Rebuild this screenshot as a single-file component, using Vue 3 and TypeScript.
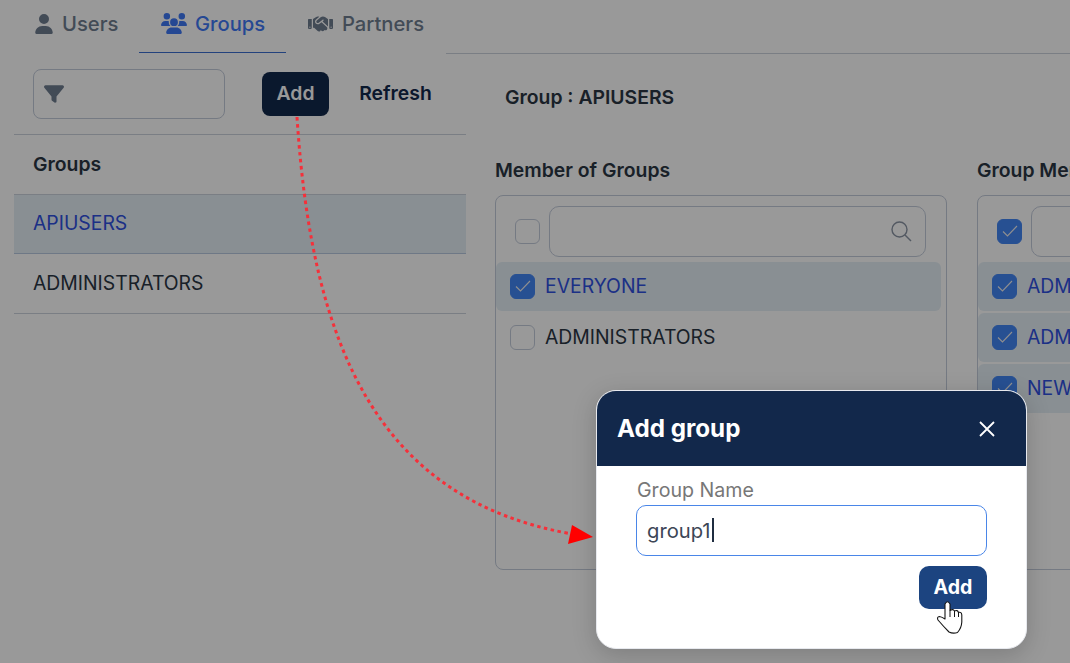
<script setup lang="ts">
interface Row { label: string; checked: boolean }
const memberOf: Row[] = [
  { label: 'EVERYONE', checked: true },
  { label: 'ADMINISTRATORS', checked: false },
]
const members: Row[] = [
  { label: 'ADMIN1', checked: true },
  { label: 'ADMIN2', checked: true },
  { label: 'NEWUSER', checked: true },
]
const panels = [
  { title: 'Member of Groups', all: false, rows: memberOf },
  { title: 'Group Members', all: true, rows: members },
]
</script>

<template>
  <div class="page">
    <nav class="tabs">
      <div class="tab users">
        <svg class="ico" width="18" height="20" viewBox="0 0 448 512"><path d="M224 256A128 128 0 1 0 224 0a128 128 0 1 0 0 256zm-45.700 48C79.800 304 0 383.800 0 482.300C0 498.700 13.300 512 29.700 512H418.300c16.400 0 29.700-13.300 29.700-29.700C448 383.800 368.200 304 269.700 304H178.300z"/></svg>
        <span>Users</span>
      </div>
      <div class="tab groups">
        <svg class="ico" width="26" height="21" viewBox="0 0 640 512"><path d="M144 0a80 80 0 1 1 0 160A80 80 0 1 1 144 0zM512 0a80 80 0 1 1 0 160A80 80 0 1 1 512 0zM0 298.700C0 239.800 47.800 192 106.700 192h42.700c15.900 0 31 3.500 44.600 9.700c-1.300 7.200-1.900 14.700-1.900 22.300c0 38.200 16.800 72.500 43.300 96c-.2 0-.4 0-.7 0H21.300C9.600 320 0 310.400 0 298.700zM405.300 320c-.2 0-.4 0-.7 0c26.600-23.500 43.300-57.800 43.300-96c0-7.600-.7-15-1.900-22.300c13.600-6.300 28.700-9.700 44.600-9.700h42.700C592.200 192 640 239.800 640 298.700c0 11.800-9.600 21.300-21.300 21.300H405.300zM224 224a96 96 0 1 1 192 0 96 96 0 1 1 -192 0zM128 485.300C128 411.700 187.700 352 261.300 352H378.700C452.300 352 512 411.700 512 485.300c0 14.700-11.900 26.700-26.700 26.700H154.700c-14.700 0-26.700-11.900-26.700-26.700z"/></svg>
        <span>Groups</span>
      </div>
      <div class="tab partners">
        <svg class="ico" width="25" height="20" viewBox="0 0 640 512"><path d="M323.400 85.200l-96.800 78.400c-16.100 13-19.200 36.400-7 53.100c12.900 17.800 38 21.300 55.300 7.800l99.300-77.200c7-5.400 17-4.200 22.500 2.800s4.200 17-2.800 22.500l-20.900 16.200L512 316.800V128h-.7l-3.900-2.500L434.800 79c-15.300-9.800-33.200-15-51.400-15c-21.800 0-43 7.500-60 21.200zm22.800 124.400l-51.700 40.200C263 274.400 217.300 268 193.700 235.600c-22.200-30.500-16.600-73.100 12.700-96.800l83.200-67.300c-11.600-4.900-24.100-7.400-36.800-7.400C234 64 215.700 69.600 200 80l-72 48V352h28.200l91.400 83.400c19.600 17.900 49.900 16.500 67.800-3.100c5.500-6.100 9.200-13.200 11.100-20.600l17 15.600c19.500 17.900 49.900 16.600 67.800-2.900c4.500-4.900 7.800-10.600 9.900-16.500c19.400 13 45.800 10.300 62.100-7.500c17.900-19.500 16.600-49.900-2.900-67.800l-134.200-123zM16 128c-8.800 0-16 7.200-16 16V352c0 17.700 14.300 32 32 32H64c17.700 0 32-14.300 32-32V128H16zM48 320a16 16 0 1 1 0 32 16 16 0 1 1 0-32zM544 128V352c0 17.700 14.300 32 32 32h32c17.700 0 32-14.300 32-32V144c0-8.800-7.200-16-16-16H544zm32 208a16 16 0 1 1 32 0 16 16 0 1 1 -32 0z"/></svg>
        <span>Partners</span>
      </div>
      <div class="tab-rest"></div>
    </nav>

    <main class="main">
      <aside class="side">
        <div class="toolbar">
          <div class="filter">
            <svg width="20" height="20" viewBox="0 0 512 512"><path d="M3.900 54.900C10.500 40.900 24.500 32 40 32H472c15.500 0 29.500 8.900 36.100 22.900s4.600 30.500-5.200 42.500L320 320.900V448c0 12.100-6.800 23.200-17.700 28.600s-23.800 4.300-33.500-3l-64-48c-8.100-6-12.800-15.500-12.800-25.600V320.900L9 97.300C-.7 85.400-2.800 68.800 3.900 54.900z"/></svg>
          </div>
          <button class="btn-add">Add</button>
          <button class="btn-refresh">Refresh</button>
        </div>
        <div class="side-head">Groups</div>
        <div class="side-row selected">APIUSERS</div>
        <div class="side-row">ADMINISTRATORS</div>
      </aside>

      <section class="detail">
        <h2 class="detail-title">Group : APIUSERS</h2>
        <div class="panels">
          <div v-for="p in panels" :key="p.title" class="col">
            <h3 class="col-title">{{ p.title }}</h3>
            <div class="panel">
              <div class="search-row">
                <span class="check head-check" :class="{ on: p.all }">
                  <svg v-if="p.all" width="18" height="18" viewBox="0 0 18 18"><path d="M2 9.500l4.500 4.500L16 4" fill="none" stroke="currentColor" stroke-width="1.100"/></svg>
                </span>
                <div class="search">
                  <svg width="22" height="22" viewBox="0 0 22 22" fill="none" stroke="currentColor" stroke-width="1.400"><circle cx="9.500" cy="9.500" r="7.500"/><path d="M15 15l6 6"/></svg>
                </div>
              </div>
              <div v-for="r in p.rows" :key="r.label" class="item" :class="{ on: r.checked }">
                <span class="check" :class="{ on: r.checked }">
                  <svg v-if="r.checked" width="18" height="18" viewBox="0 0 18 18"><path d="M2 9.500l4.500 4.500L16 4" fill="none" stroke="currentColor" stroke-width="1.100"/></svg>
                </span>
                <span>{{ r.label }}</span>
              </div>
            </div>
          </div>
        </div>
      </section>
    </main>

    <div class="overlay"></div>

    <div class="modal">
      <header class="modal-head">
        <span class="modal-title">Add group</span>
        <svg width="18" height="18" viewBox="0 0 18 18" stroke="#fff" stroke-width="1.800" fill="none"><path d="M2 2l14 14M16 2L2 16"/></svg>
      </header>
      <div class="modal-body">
        <label class="field-label">Group Name</label>
        <div class="field">group1<i class="caret"></i></div>
        <div class="modal-actions"><button class="modal-add">Add</button></div>
      </div>
    </div>

    <svg class="annot" width="1070" height="663" viewBox="0 0 1070 663">
      <path d="M297 117C312 350 380 500 572 534" fill="none" stroke="#f5303a" stroke-width="3" stroke-dasharray="3.500 3.500"/>
      <path d="M593 537L572 525L568 544Z" fill="#ff0000"/>
      <path d="M945 619L945 604Q947.500 599.500 950 604L950 610.500Q953 608.500 954.500 611Q957.500 609.500 958.500 612.500Q961.500 611.500 961.800 615L961.800 622Q961.500 628 957.500 632.500Q953 634 949 632Q944 627 938 620Q936.500 617 939.500 616.500Q942 617 945 619Z" fill="#fff" stroke="#151515" stroke-width="1.100" stroke-linejoin="round"/>
      <path d="M950 610.500V617M954.500 611V617M958.500 612.500V617" stroke="#151515" stroke-width="1" fill="none"/>
    </svg>
  </div>
</template>

<style>
html, body { margin: 0; padding: 0; background: #fff; }
</style>

<style scoped>
.page {
  position: relative;
  width: 1070px;
  height: 663px;
  overflow: hidden;
  background: #fff;
  font-family: Inter, "Liberation Sans", sans-serif;
  color: #1f2937;
}
.tabs { display: flex; height: 53px; }
.tab {
  display: flex;
  align-items: center;
  gap: 9px;
  box-sizing: border-box;
  height: 53px;
  padding-bottom: 6px;
  font-size: 20.200px;
  font-weight: 500;
  color: #6f7d90;
}
.tab.users { margin-left: 35px; width: 104px; }
.tab.groups {
  width: 147px;
  padding-left: 22px;
  padding-bottom: 5px;
  gap: 8px;
  color: #3f78f5;
  border-bottom: 1px solid #3b6fd0;
}
.tab.partners { width: 160px; padding-left: 22px; }
.tab-rest { flex: 1; height: 54px; box-sizing: border-box; border-bottom: 1px solid #ccd3dd; }
.ico { fill: currentColor; flex: none; }

.main { display: flex; }
.side { margin-left: 14px; width: 452px; flex: none; }
.toolbar {
  display: flex;
  align-items: flex-start;
  box-sizing: border-box;
  height: 82px;
  padding: 16px 0 0 19px;
  border-bottom: 1px solid #ccd3dd;
}
.filter {
  box-sizing: border-box;
  width: 192px;
  height: 50px;
  border: 1px solid #c4ccdb;
  border-radius: 8px;
  display: flex;
  align-items: center;
  padding-left: 10px;
  color: #6f7d90;
}
.filter svg { fill: currentColor; }
.btn-add, .btn-refresh {
  font-family: inherit;
  font-size: 19.360px;
  font-weight: 600;
  border: 0;
  padding: 0;
  height: 44px;
  margin-top: 3px;
}
.btn-add {
  width: 67px;
  margin-left: 37px;
  padding-bottom: 2px;
  background: #12284b;
  color: #fff;
  border-radius: 8px;
}
.btn-refresh {
  width: 73px;
  margin-left: 30px;
  padding-bottom: 2px;
  background: none;
  color: #12284b;
}
.side-head, .side-row {
  box-sizing: border-box;
  display: flex;
  align-items: center;
  padding-left: 19px;
  padding-bottom: 2px;
  border-bottom: 1px solid #ccd3dd;
  height: 60px;
  font-size: 19.360px;
}
.side-head { font-weight: 600; color: #2b3644; }
.side-row { color: #2b3644; }
.side-row.selected {
  height: 59px;
  padding-bottom: 3px;
  background: #e5eff6;
  color: #2f50e0;
  border-bottom-color: #b8c8e0;
}

.detail { margin-left: 29px; flex: none; width: 600px; }
.detail-title {
  margin: 32px 0 0 10px;
  font-size: 19.360px;
  font-weight: 600;
  line-height: 24px;
  color: #2b3644;
}
.panels { display: flex; gap: 30px; margin-top: 49px; }
.col { flex: none; width: 452px; }
.col-title {
  margin: 0 0 13px;
  font-size: 19.360px;
  font-weight: 600;
  line-height: 24px;
  color: #2b3644;
}
.panel {
  box-sizing: border-box;
  width: 452px;
  height: 375px;
  border: 1px solid #c4ccdb;
  border-radius: 8px;
}
.search-row {
  display: flex;
  align-items: center;
  box-sizing: border-box;
  height: 66px;
  padding-top: 4px;
}
.head-check { margin-left: 19px; margin-right: 9px; }
.check {
  box-sizing: border-box;
  flex: none;
  width: 25px;
  height: 25px;
  border: 1px solid #c4ccdb;
  border-radius: 6px;
  display: flex;
  align-items: center;
  justify-content: center;
  background: #fff;
  color: #eee;
}
.check.on { background: #4285f4; border-color: #4285f4; }
.search {
  box-sizing: border-box;
  width: 377px;
  height: 51px;
  border: 1px solid #c4ccdb;
  border-radius: 10px;
  display: flex;
  align-items: center;
  justify-content: flex-end;
  padding-right: 13px;
  color: #8a94a3;
}
.item {
  box-sizing: border-box;
  display: flex;
  align-items: center;
  gap: 10px;
  width: 445px;
  height: 49px;
  margin-bottom: 2px;
  padding-left: 14px;
  padding-bottom: 1px;
  border-radius: 6px;
  font-size: 19.360px;
  color: #2b3644;
}
.item.on { background: #e5eff6; color: #2f50e0; }

.overlay {
  position: absolute;
  inset: 0;
  background: rgba(0, 0, 0, 0.4);
}

.modal {
  position: absolute;
  left: 596px;
  top: 390px;
  width: 431px;
  height: 259px;
  box-sizing: border-box;
  border: 1px solid #e7e9ee;
  border-radius: 20px;
  background: #fff;
  overflow: hidden;
  box-shadow: 0 6px 24px rgba(0, 0, 0, 0.18);
}
.modal-head {
  box-sizing: border-box;
  height: 75px;
  background: #12284b;
  color: #fff;
  display: flex;
  align-items: center;
  justify-content: space-between;
  padding: 0 30px 0 20px;
}
.modal-title { font-size: 24.200px; font-weight: 700; }
.modal-body { padding: 11px 39px 0 39px; }
.field-label {
  display: block;
  margin-left: 1px;
  font-size: 19.600px;
  line-height: 26px;
  color: #777;
}
.field {
  box-sizing: border-box;
  height: 51px;
  margin-top: 2px;
  padding: 0 0 1px 10px;
  border: 1px solid #4a86e8;
  border-radius: 10px;
  display: flex;
  align-items: center;
  font-size: 20.200px;
  color: #3c4656;
}
.caret { width: 2px; height: 24px; background: #1f2d40; margin-left: 1px; }
.modal-actions { display: flex; justify-content: flex-end; margin-top: 10px; }
.modal-add {
  width: 68px;
  height: 43px;
  border: 0;
  padding: 0 0 2px;
  border-radius: 10px;
  background: #1c4480;
  color: #fff;
  font-family: inherit;
  font-size: 19.600px;
  font-weight: 700;
}
.annot { position: absolute; left: 0; top: 0; pointer-events: none; }
</style>
